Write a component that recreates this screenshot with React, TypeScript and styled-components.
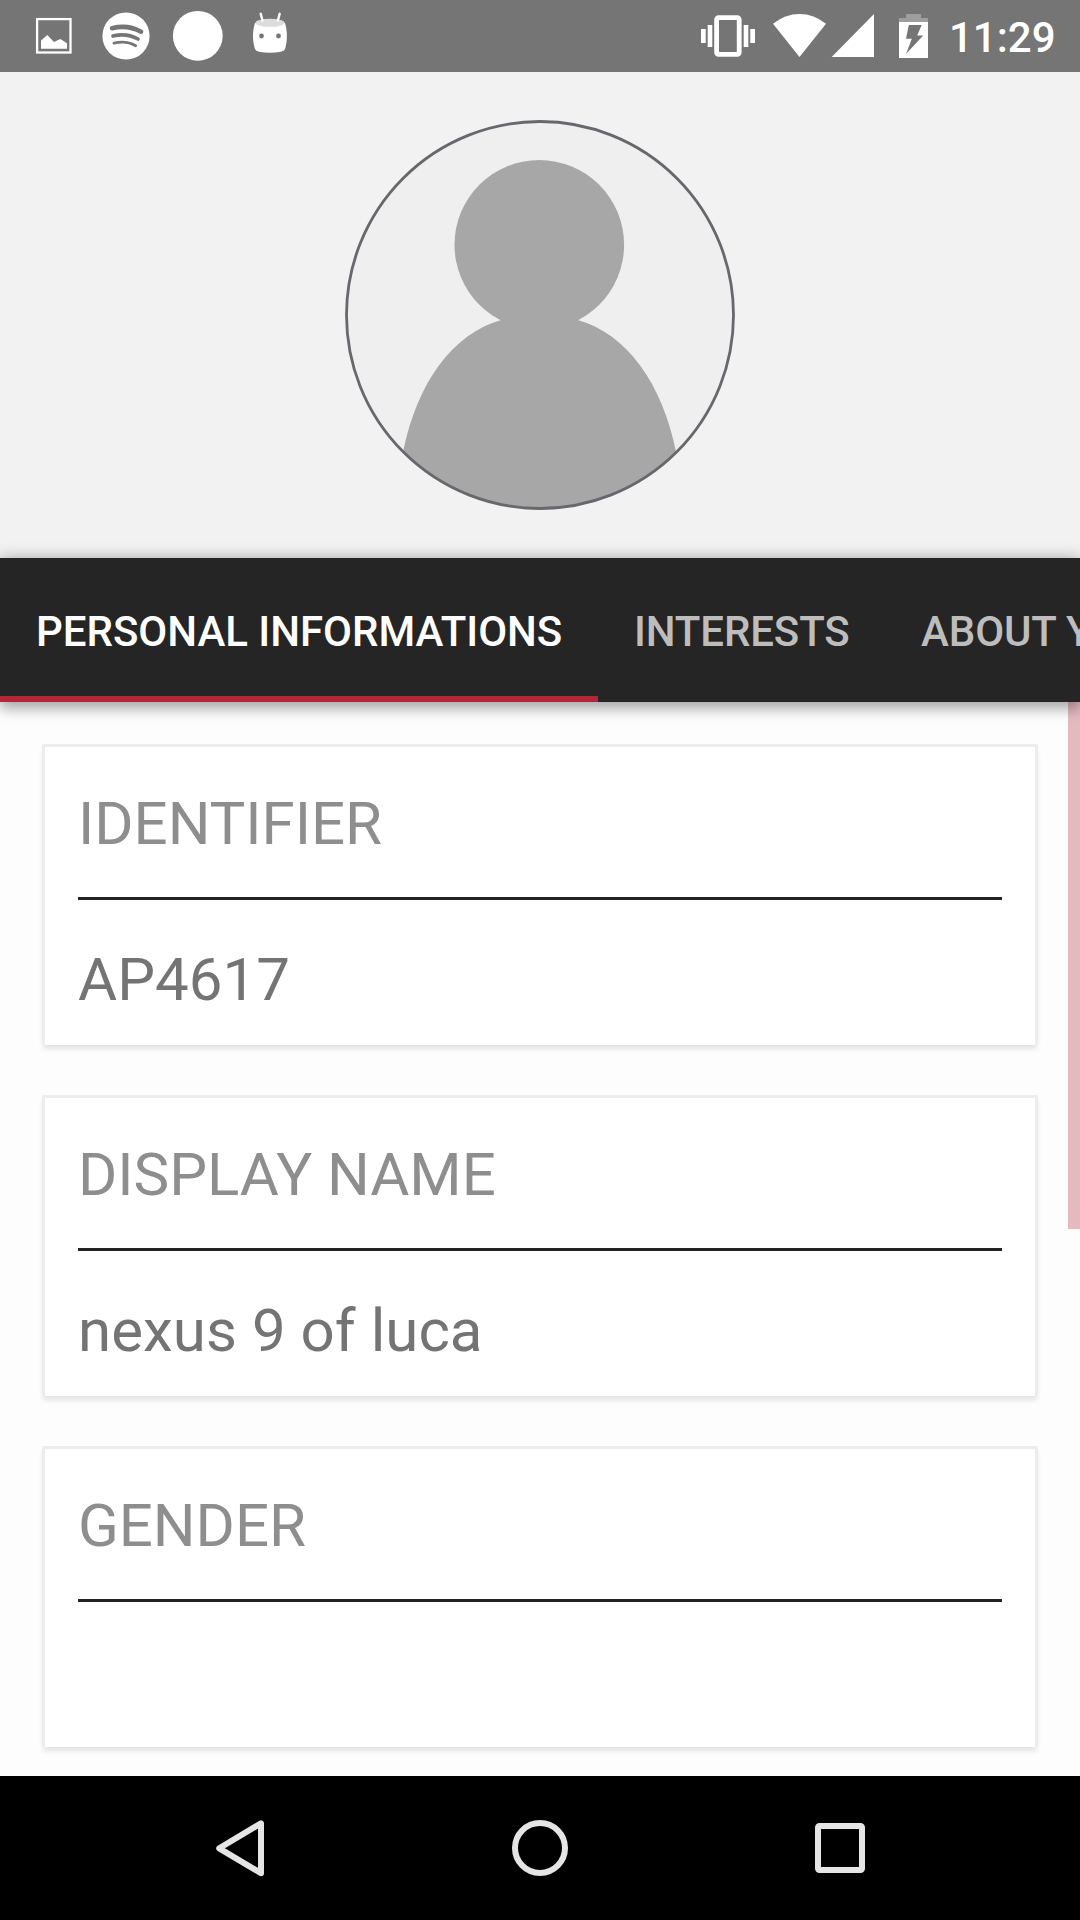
import React from "react";
import styled, { createGlobalStyle } from "styled-components";

const GlobalStyle = createGlobalStyle`
  * { box-sizing: border-box; }
  body { margin: 0; background: #fdfdfd; font-family: Roboto, "Noto Sans", sans-serif; }
`;

const Screen = styled.div`
  width: 1080px;
  height: 1920px;
  display: flex;
  flex-direction: column;
  overflow: hidden;
`;

const StatusBar = styled.header`
  flex: none;
  height: 72px;
  display: flex;
  justify-content: space-between;
  background: #757575;
`;

const StatusGroup = styled.div`
  display: flex;
  padding-right: 23px;
`;

const Clock = styled.time`
  width: 108px;
  padding-top: 13px;
  color: #fff;
  font-size: 42px;
  font-weight: 500;
  line-height: 50px;
  white-space: nowrap;
`;

const Profile = styled.section`
  flex: none;
  height: 486px;
  display: flex;
  align-items: center;
  justify-content: center;
  background: #f2f2f2;
`;

const TabBar = styled.nav`
  flex: none;
  height: 144px;
  display: flex;
  position: relative;
  z-index: 1;
  background: #252525;
  box-shadow: 0 0 14px rgba(0, 0, 0, 0.32), 0 10px 11px rgba(0, 0, 0, 0.16);
`;

const Tab = styled.button<{ $width: number; $active?: boolean }>`
  flex: none;
  width: ${(p) => p.$width}px;
  padding: 10px 0 0 36px;
  border: 0;
  border-bottom: 6px solid ${(p) => (p.$active ? "#b0263a" : "transparent")};
  background: none;
  color: ${(p) => (p.$active ? "#fff" : "#bdbdbd")};
  font: 500 42px/50px Roboto, sans-serif;
  letter-spacing: ${(p) => (p.$active ? "-0.02px" : "-0.12px")};
  text-align: left;
  white-space: nowrap;
`;

const Content = styled.main`
  flex: 1;
  min-height: 0;
  display: flex;
  justify-content: space-between;
  padding-left: 42px;
  background: #fdfdfd;
`;

const CardList = styled.div`
  width: 996px;
  display: flex;
  flex-direction: column;
  gap: 50px;
  padding-top: 42px;
`;

const ScrollThumb = styled.div`
  width: 12px;
  height: 527px;
  background: #e5b9c0;
`;

const Card = styled.article`
  flex: none;
  height: 301px;
  padding: 42px 33px 0;
  border: 3px solid #ededed;
  border-bottom: 0;
  border-radius: 2px;
  background: #fff;
  box-shadow: 0 5px 5px -1px rgba(0, 0, 0, 0.1);
`;

const CardTitle = styled.h2`
  height: 111px;
  margin: 0;
  border-bottom: 3px solid #232325;
  color: #8e8e8e;
  font-size: 60px;
  font-weight: 400;
  letter-spacing: -0.05px;
  line-height: 70px;
`;

const CardValue = styled.p`
  margin: 0;
  padding: 45px 0 0;
  color: #747474;
  font-size: 60px;
  letter-spacing: 0.04px;
  line-height: 70px;
`;

const NavBar = styled.footer`
  flex: none;
  height: 144px;
  display: flex;
  align-items: center;
  justify-content: center;
  background: #000;
`;

const NavButton = styled.button<{ $width: number }>`
  width: ${(p) => p.$width}px;
  height: 144px;
  padding: 0;
  border: 0;
  background: none;
  display: flex;
  align-items: center;
  justify-content: center;
`;

const NotificationIcons = () => (
  <svg width="300" height="72" viewBox="0 0 300 72" fill="#fff">
    <rect x="37.1" y="19.1" width="33.4" height="33.4" fill="none" stroke="#fff" strokeWidth="2.3" />
    <path d="M41 48.7V40.5L47.3 35L54 42L60.3 39L67 43.3V48.7Z" />
    <circle cx="126" cy="36" r="23.6" />
    <g fill="none" stroke="#757575" strokeLinecap="round">
      <path d="M112 28.2Q128 24.3 141 31.7" strokeWidth="4.6" />
      <path d="M113 36Q126.5 32.5 138 39" strokeWidth="3.7" />
      <path d="M114 43.2Q126 40.3 135.7 45.7" strokeWidth="2.8" />
    </g>
    <circle cx="197.8" cy="35.8" r="24.9" />
    <path d="M255 23H285C287.5 31 287.5 41 285 49Q284.3 51 281 51.8Q270 53.8 259 51.8Q255.7 51 255 49C252.3 41 252.3 31 255 23Z" />
    <ellipse cx="270" cy="22.8" rx="14.6" ry="4" fill="#dcdcdc" />
    <path d="M260.7 13.8L262.5 20.5M279.7 13.8L277.9 20.5" stroke="#fff" strokeWidth="2.4" strokeLinecap="round" />
    <g fill="#757575"><circle cx="261.5" cy="36" r="2.4" /><circle cx="278.5" cy="36" r="2.4" /></g>
  </svg>
);

const SystemIcons = () => (
  <svg width="251" height="72" viewBox="698 0 251 72" fill="#fff">
    <rect x="716.6" y="17.6" width="22.6" height="36.8" rx="2" fill="none" stroke="#fff" strokeWidth="4.8" />
    <path d="M701 29h4.7v14H701zM707.7 25h4.6v22h-4.6zM743.7 25h4.6v22h-4.6zM750.3 29h4.7v14h-4.7z" />
    <path d="M773 23.7Q785 14 799.5 14T826 23.7L799.5 57Z" />
    <path d="M831.7 57L874 14V57Z" />
    <path d="M899 22V18H906V14H921V18H928V22Z" fill="#9e9e9e" />
    <path fillRule="evenodd" d="M899 22H928V58H899ZM908.8 25L906 38.8H911.8L906.2 53.7L923.2 35.5H917.2L921.7 25Z" />
  </svg>
);

const Avatar = () => (
  <svg width="390" height="390" viewBox="345 120 390 390">
    <defs><clipPath id="portrait"><circle cx="540" cy="315" r="193.5" /></clipPath></defs>
    <circle cx="540" cy="315" r="194" fill="#efefef" />
    <g clipPath="url(#portrait)" fill="#a7a7a7">
      <circle cx="539.3" cy="244.8" r="84.8" />
      <path d="M501.3 320C452 334 417 383 403 452V512H676V452C662 383 627 334 577.7 320Z" />
    </g>
    <circle cx="540" cy="315" r="193.5" fill="none" stroke="#68676d" strokeWidth="2.8" />
  </svg>
);

const fields = [
  { label: "IDENTIFIER", value: "AP4617" },
  { label: "DISPLAY NAME", value: "nexus 9 of luca" },
  { label: "GENDER", value: "" },
];

export default function App() {
  return (
    <>
      <GlobalStyle />
      <Screen>
        <StatusBar>
          <NotificationIcons />
          <StatusGroup>
            <SystemIcons />
            <Clock>11:29</Clock>
          </StatusGroup>
        </StatusBar>
        <Profile><Avatar /></Profile>
        <TabBar>
          <Tab $width={598} $active>PERSONAL INFORMATIONS</Tab>
          <Tab $width={287}>INTERESTS</Tab>
          <Tab $width={300}>ABOUT YOU</Tab>
        </TabBar>
        <Content>
          <CardList>
            {fields.map((field) => (
              <Card key={field.label}>
                <CardTitle>{field.label}</CardTitle>
                <CardValue>{field.value}</CardValue>
              </Card>
            ))}
          </CardList>
          <ScrollThumb />
        </Content>
        <NavBar>
          <NavButton $width={300} aria-label="Back">
            <svg width="60" height="60" viewBox="0 0 60 60" fill="none" stroke="#e5e5e5" strokeWidth="6" strokeLinejoin="round">
              <path d="M9.2 30.3L51 5.3V55.2Z" />
            </svg>
          </NavButton>
          <NavButton $width={300} aria-label="Home">
            <svg width="60" height="60" viewBox="0 0 60 60" fill="none" stroke="#e5e5e5" strokeWidth="6">
              <circle cx="30" cy="30" r="25" />
            </svg>
          </NavButton>
          <NavButton $width={300} aria-label="Overview">
            <svg width="60" height="60" viewBox="0 0 60 60" fill="none" stroke="#e5e5e5" strokeWidth="6">
              <rect x="8" y="8" width="44" height="44" rx="1.5" />
            </svg>
          </NavButton>
        </NavBar>
      </Screen>
    </>
  );
}
